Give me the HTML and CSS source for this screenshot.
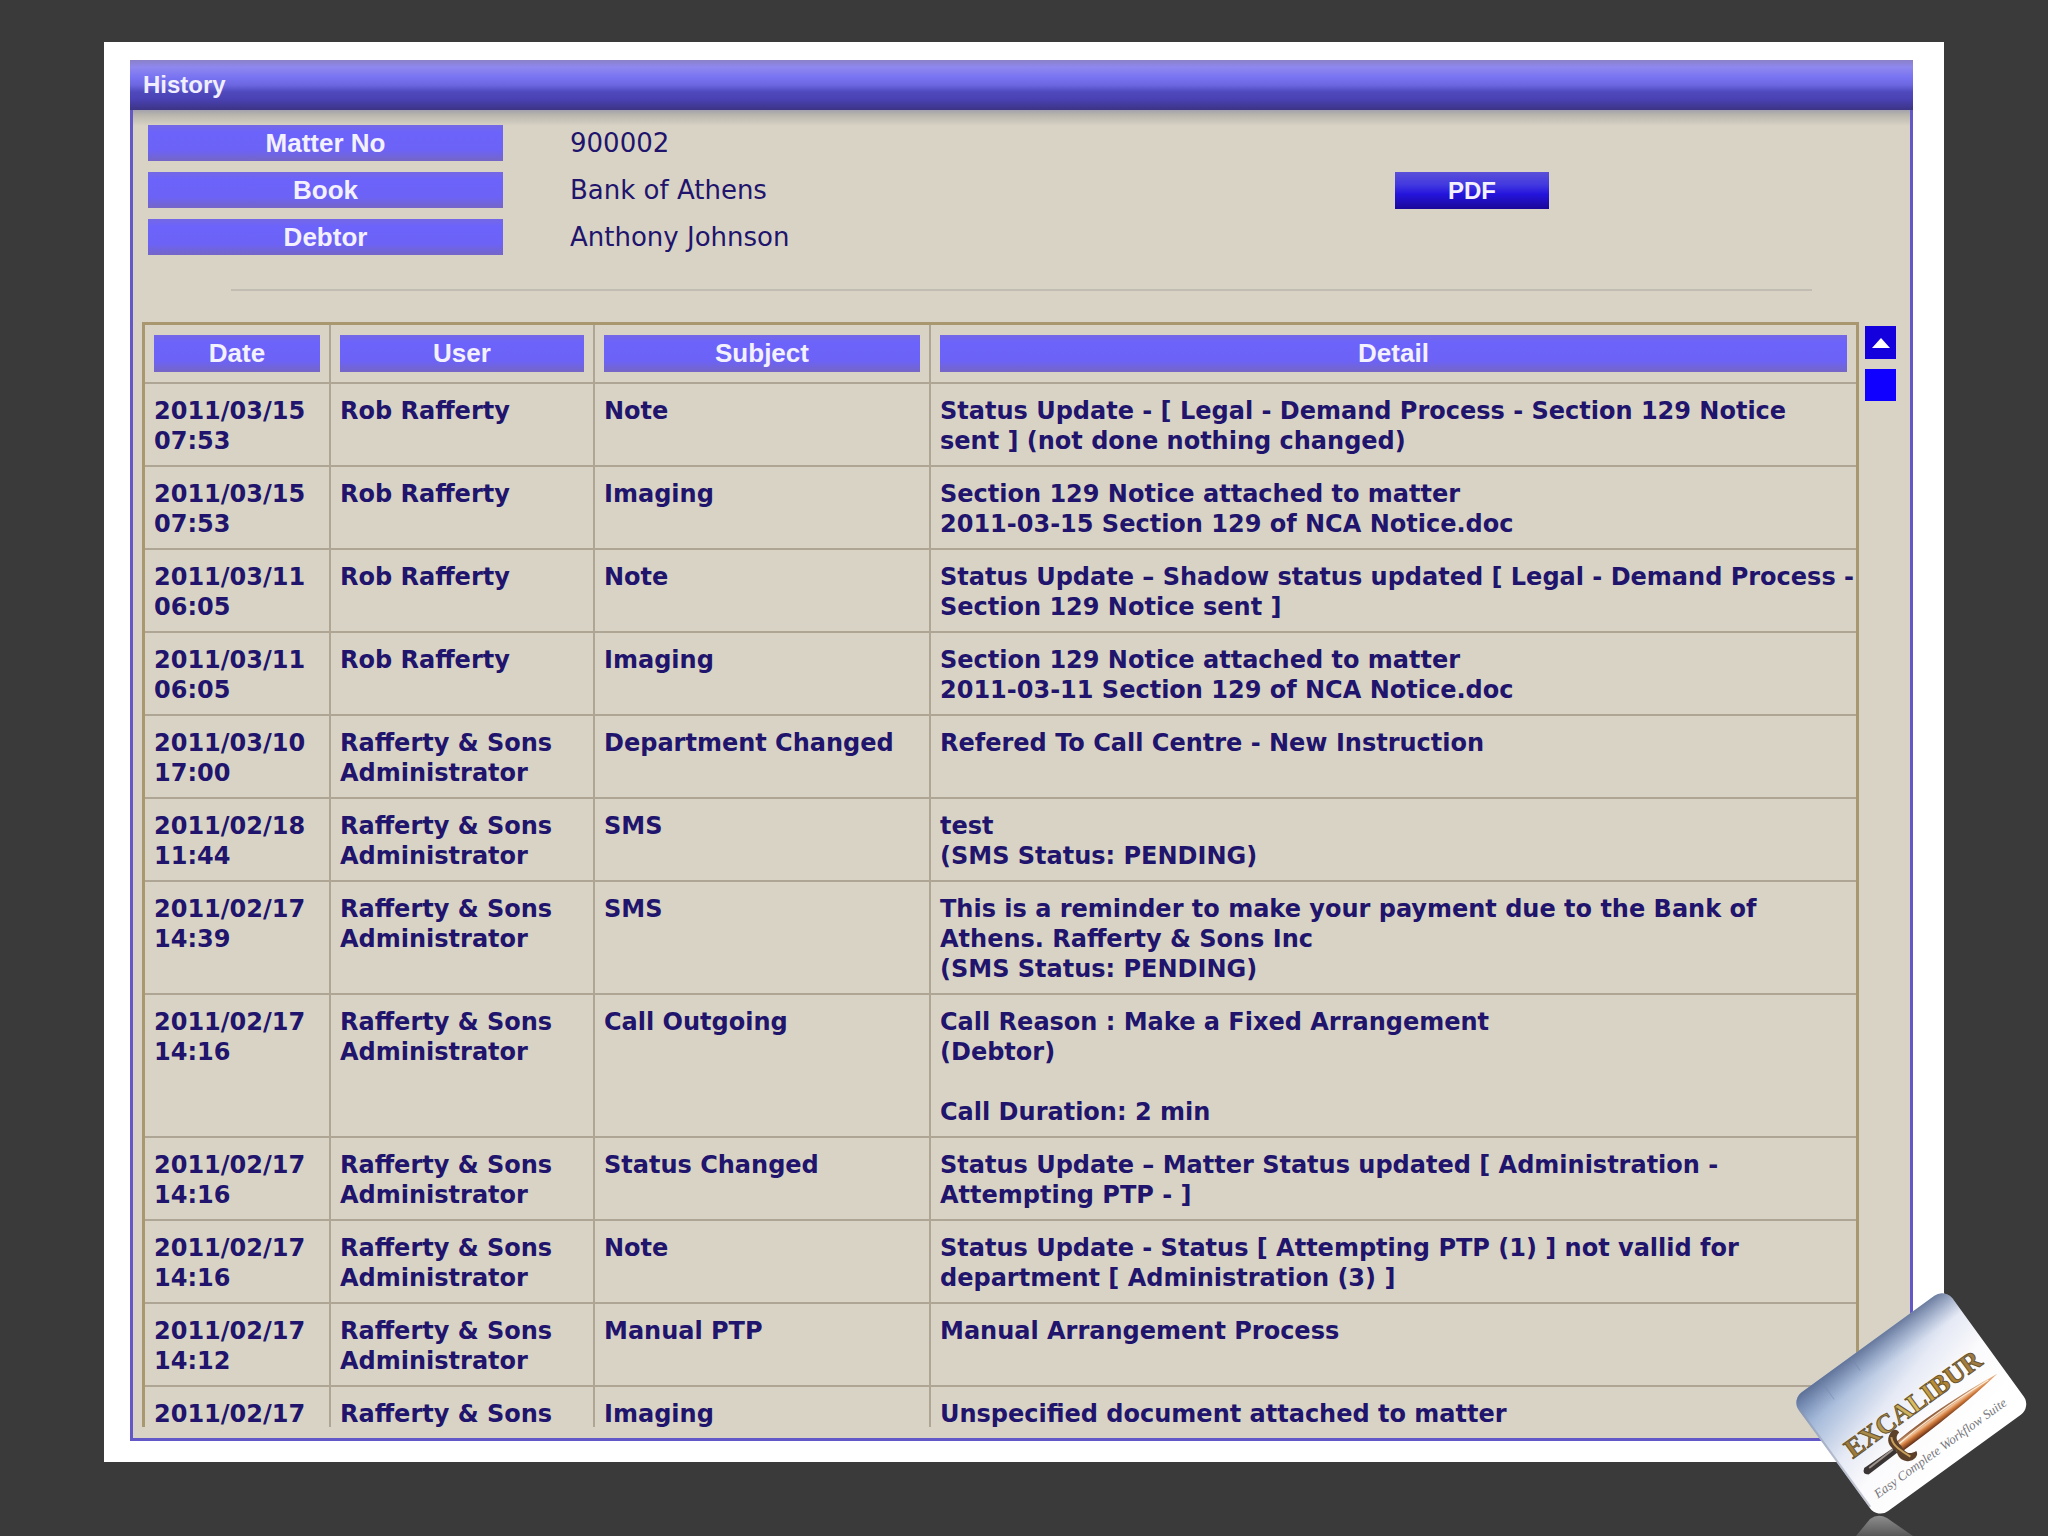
FILE: index.html
```html
<!DOCTYPE html>
<html lang="en">
<head>
<meta charset="utf-8">
<title>History</title>
<link rel="stylesheet" href="styles.css">
</head>
<body>
<main class="slide">
  <section class="window">
    <h1 class="title">History</h1>
    <div class="info">
      <dl class="fields">
        <dt class="tag">Matter No</dt><dd>900002</dd>
        <dt class="tag">Book</dt><dd>Bank of Athens</dd>
        <dt class="tag">Debtor</dt><dd>Anthony Johnson</dd>
      </dl>
      <div class="actions"><button class="pdf" type="button">PDF</button></div>
    </div>
    <hr class="rule">
    <div class="list">
      <div class="viewport">
        <table class="history">
          <colgroup><col class="c-date"><col class="c-user"><col class="c-subject"><col></colgroup>
          <thead>
            <tr>
              <th scope="col"><span class="tag">Date</span></th>
              <th scope="col"><span class="tag">User</span></th>
              <th scope="col"><span class="tag">Subject</span></th>
              <th scope="col"><span class="tag">Detail</span></th>
            </tr>
          </thead>
          <tbody>
            <tr><td>2011/03/15<br>07:53</td><td>Rob Rafferty</td><td>Note</td><td>Status Update - [ Legal - Demand Process - Section 129 Notice<br>sent ] (not done nothing changed)</td></tr>
            <tr><td>2011/03/15<br>07:53</td><td>Rob Rafferty</td><td>Imaging</td><td>Section 129 Notice attached to matter<br>2011-03-15 Section 129 of NCA Notice.doc</td></tr>
            <tr><td>2011/03/11<br>06:05</td><td>Rob Rafferty</td><td>Note</td><td>Status Update – Shadow status updated [ Legal - Demand Process -<br>Section 129 Notice sent ]</td></tr>
            <tr><td>2011/03/11<br>06:05</td><td>Rob Rafferty</td><td>Imaging</td><td>Section 129 Notice attached to matter<br>2011-03-11 Section 129 of NCA Notice.doc</td></tr>
            <tr><td>2011/03/10<br>17:00</td><td>Rafferty &amp; Sons<br>Administrator</td><td>Department Changed</td><td>Refered To Call Centre - New Instruction</td></tr>
            <tr><td>2011/02/18<br>11:44</td><td>Rafferty &amp; Sons<br>Administrator</td><td>SMS</td><td>test<br>(SMS Status: PENDING)</td></tr>
            <tr><td>2011/02/17<br>14:39</td><td>Rafferty &amp; Sons<br>Administrator</td><td>SMS</td><td>This is a reminder to make your payment due to the Bank of<br>Athens. Rafferty &amp; Sons Inc<br>(SMS Status: PENDING)</td></tr>
            <tr><td>2011/02/17<br>14:16</td><td>Rafferty &amp; Sons<br>Administrator</td><td>Call Outgoing</td><td>Call Reason : Make a Fixed Arrangement<br>(Debtor)<br><br>Call Duration: 2 min</td></tr>
            <tr><td>2011/02/17<br>14:16</td><td>Rafferty &amp; Sons<br>Administrator</td><td>Status Changed</td><td>Status Update – Matter Status updated [ Administration -<br>Attempting PTP - ]</td></tr>
            <tr><td>2011/02/17<br>14:16</td><td>Rafferty &amp; Sons<br>Administrator</td><td>Note</td><td>Status Update - Status [ Attempting PTP (1) ] not vallid for<br>department [ Administration (3) ]</td></tr>
            <tr><td>2011/02/17<br>14:12</td><td>Rafferty &amp; Sons<br>Administrator</td><td>Manual PTP</td><td>Manual Arrangement Process</td></tr>
            <tr><td>2011/02/17</td><td>Rafferty &amp; Sons</td><td>Imaging</td><td>Unspecified document attached to matter</td></tr>
          </tbody>
        </table>
      </div>
      <div class="scroll">
        <button class="scroll-up" type="button" aria-label="Scroll up">
          <svg width="18" height="10" viewBox="0 0 18 10"><path d="M9 0 18 10H0Z" fill="#fff"/></svg>
        </button>
        <div class="thumb"></div>
      </div>
    </div>
  </section>
</main>
<svg class="logo" width="252" height="251" viewBox="1790 1285 252 251" role="img" aria-label="Excalibur">
  <defs>
    <linearGradient id="sky" x1="0" y1="0" x2="0.35" y2="1">
      <stop offset="0" stop-color="#6f8dbb"/><stop offset="0.22" stop-color="#a9bddb"/><stop offset="0.48" stop-color="#e6eaf5"/><stop offset="0.7" stop-color="#fbfafc"/><stop offset="1" stop-color="#ffffff"/>
    </linearGradient>
    <linearGradient id="edge" x1="0" y1="0" x2="0" y2="1">
      <stop offset="0" stop-color="#55658a" stop-opacity="0.75"/><stop offset="0.2" stop-color="#8796b8" stop-opacity="0"/>
    </linearGradient>
    <linearGradient id="gold" x1="0" y1="0" x2="1" y2="0">
      <stop offset="0" stop-color="#9a7638"/><stop offset="0.3" stop-color="#b59a55"/><stop offset="0.5" stop-color="#d9bd62"/><stop offset="0.7" stop-color="#b5852f"/><stop offset="1" stop-color="#9b7a45"/>
    </linearGradient>
    <linearGradient id="blade" x1="0" y1="0" x2="0" y2="1">
      <stop offset="0" stop-color="#7a4526"/><stop offset="0.35" stop-color="#f2c39a"/><stop offset="0.6" stop-color="#d0793a"/><stop offset="1" stop-color="#5c2a14"/>
    </linearGradient>
    <linearGradient id="mirror" x1="0" y1="0" x2="0" y2="1">
      <stop offset="0" stop-color="#8d8d8d"/><stop offset="1" stop-color="#585858"/>
    </linearGradient>
  </defs>
  <path d="M1856 1536 1870 1519Q1878 1513 1887 1518L1913 1536Z" fill="url(#mirror)"/>
  <g transform="translate(1911 1403) rotate(-36)">
    <rect x="-95" y="-73" width="190" height="147" rx="13" fill="url(#sky)"/>
    <rect x="-95" y="-73" width="190" height="147" rx="13" fill="url(#edge)"/>
    <path d="M-94 -60V60" stroke="#8b94a8" stroke-opacity="0.5" stroke-width="2" fill="none"/>
    <path d="M-22 -72V-56M-60 -72V-48" stroke="#7288ad" stroke-opacity="0.5" stroke-width="1"/>
    <text class="logo-name" x="-80" y="11" fill="url(#gold)">EXCALIBUR</text>
    <path d="M-36 23C-5 20 45 22 87 27C50 32 5 34 -36 34Z" fill="url(#blade)"/>
    <path d="M-34 26C0 23 40 24 76 27" stroke="#fff3df" stroke-width="1" fill="none"/>
    <path d="M-76 25Q-82 29 -76 33L-40 32V26Z" fill="#3a3534"/>
    <path d="M-72 28-42 27" stroke="#9d938c" stroke-width="2"/>
    <path d="M-40 30C-44 22 -42 15 -34 12C-30 10 -26 13 -27 17C-34 18 -34 24 -33 29C-34 36 -33 41 -24 42C-24 48 -34 49 -38 44C-42 40 -42 36 -40 30Z" fill="#5c4029"/>
    <path d="M-36 16Q-39 22 -37 29T-32 43" stroke="#c9a05c" stroke-width="2" fill="none"/>
    <text class="logo-line" x="-83" y="58">Easy Complete Workflow Suite</text>
  </g>
</svg>
</body>
</html>
```
FILE: styles.css
```css
* { box-sizing: border-box; }

body {
  margin: 0;
  height: 100vh;
  position: relative;
  overflow: hidden;
  background: #3a3a3a;
  padding: 42px 104px 74px;
  font-family: "DejaVu Sans", Verdana, sans-serif;
  color: #20146c;
}

.slide {
  height: 100%;
  background: #fff;
  padding: 18px 31px 21px 26px;
}

.window {
  height: 100%;
  display: flex;
  flex-direction: column;
  background: #d9d3c5;
  border: 3px solid #6358c8;
  border-top: 0;
  padding-bottom: 11px;
}

.title {
  margin: 0 -3px;
  flex: none;
  height: 50px;
  padding-left: 13px;
  font: bold 24px/50px "Liberation Sans", Arial, sans-serif;
  color: #f0eeff;
  background: linear-gradient(#8a80c8, #8f88ee 14%, #7873f2 35%, #6c66e0 50%, #4f49bd 64%, #4a42b4 78%, #3c3484);
}

.info {
  display: flex;
  padding: 15px 15px 0;
  background: linear-gradient(#a3a1ac, #b9b6ae 5px, #d9d3c5 16px);
}

.fields {
  flex: 1;
  margin: 0;
  display: grid;
  grid-template-columns: 355px 1fr;
  grid-auto-rows: 36px;
  gap: 11px 67px;
  font-size: 26px;
  line-height: 36px;
}

.fields dd { margin: 0; }

.tag {
  display: block;
  font: bold 26px/36px "Liberation Sans", Arial, sans-serif;
  text-align: center;
  color: #f4f1ff;
  background: linear-gradient(#7468e4, #6c63fb 20%, #6c62f6 70%, #7566c6);
}

.actions {
  flex: none;
  width: 500px;
  display: flex;
  align-items: center;
}

.pdf {
  width: 154px;
  height: 37px;
  border: 0;
  padding: 0;
  color: #f4f1ff;
  font: bold 24px/37px "Liberation Sans", Arial, sans-serif;
  background: linear-gradient(#5a50d8, #4238e0 35%, #2414dc 60%, #1a0898);
}

.rule {
  width: 89%;
  height: 2px;
  flex: none;
  margin: 34px auto 31px;
  border: 0;
  background: #c2bdb2;
}

.list {
  flex: 1;
  min-height: 0;
  display: flex;
  gap: 6px;
  padding: 0 14px 0 9px;
}

.viewport {
  flex: 1;
  overflow: hidden;
}

.history {
  width: 100%;
  table-layout: fixed;
  border: 3px solid #a8976f;
  border-spacing: 0;
  font-size: 24px;
  font-weight: bold;
  line-height: 30px;
}

.c-date { width: 186px; }
.c-user { width: 264px; }
.c-subject { width: 336px; }

.history th, .history td {
  border: 0 solid #aea594;
  border-width: 0 2px 2px 0;
  vertical-align: top;
  text-align: left;
  white-space: nowrap;
}

.history th { padding: 10px 9px; }
.history th .tag { line-height: 37px; }
.history td { padding: 12px 0 9px 9px; }
.history th:last-child, .history td:last-child { border-right: 0; }

.scroll {
  width: 31px;
  display: flex;
  flex-direction: column;
  gap: 10px;
  padding-top: 4px;
}

.scroll-up {
  height: 33px;
  border: 0;
  padding: 0;
  display: flex;
  align-items: center;
  justify-content: center;
  background: #1400dc;
}

.thumb {
  height: 32px;
  background: #1000ff;
}

.logo {
  position: absolute;
  right: 6px;
  bottom: 0;
}

.logo-name {
  font: bold 27px "Liberation Serif", "Times New Roman", serif;
  stroke: #6a5530;
  stroke-width: 1px;
}

.logo-line {
  font: italic 13px "Liberation Serif", "Times New Roman", serif;
  fill: #77777c;
}
```
